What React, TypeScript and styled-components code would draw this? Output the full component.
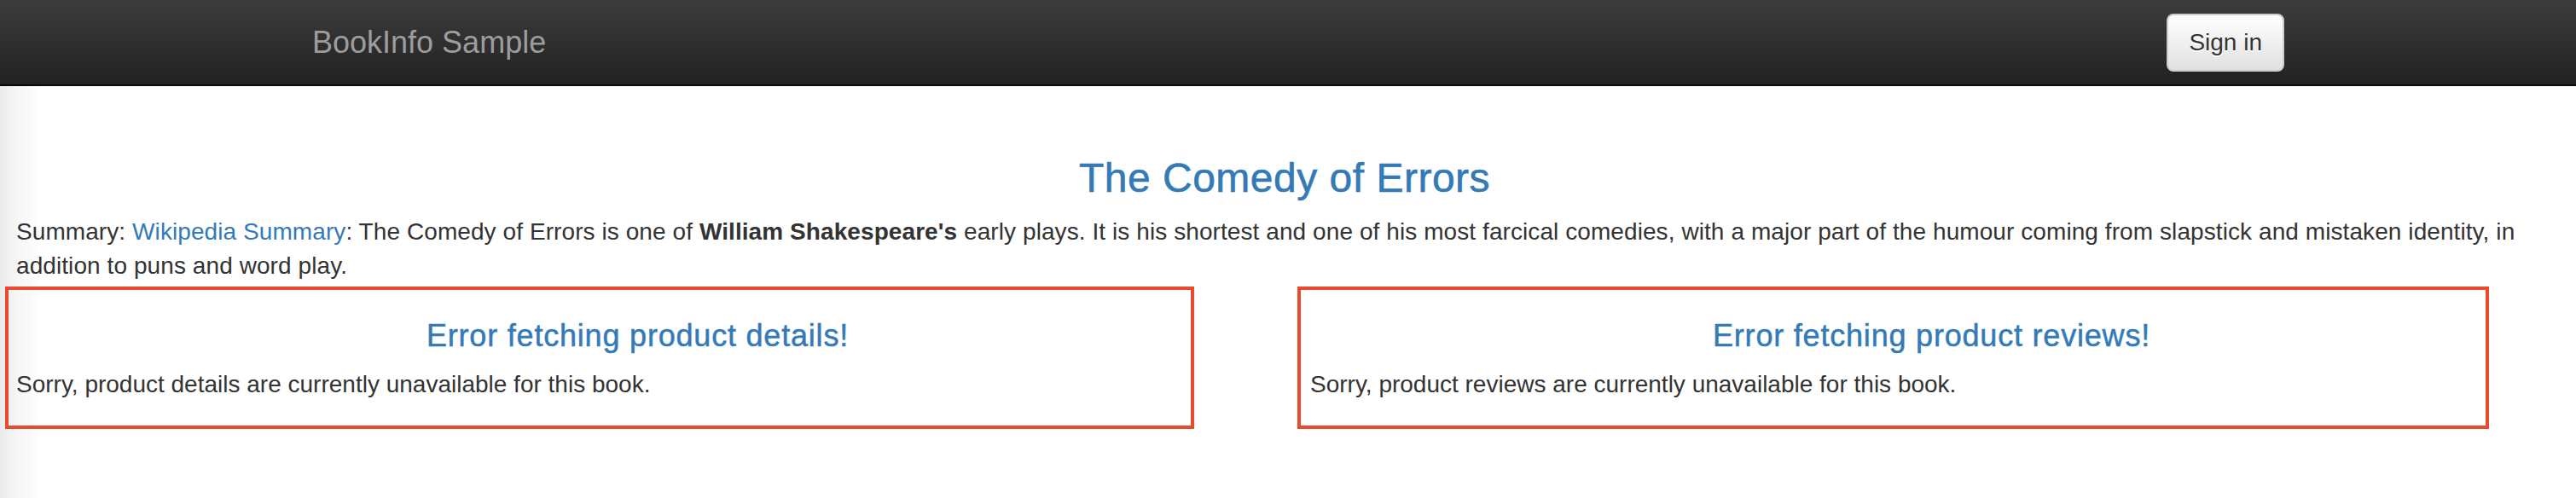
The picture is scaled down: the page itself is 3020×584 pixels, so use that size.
import React from "react";
import styled, { createGlobalStyle } from "styled-components";

const GlobalStyle = createGlobalStyle`
  html, body {
    margin: 0;
    padding: 0;
    background: #ffffff;
    overflow: hidden;
  }
  body {
    font-family: "Liberation Sans", Arial, Helvetica, sans-serif;
    font-size: 28px;
    line-height: 40px;
    color: #333333;
  }
  * { box-sizing: border-box; }
`;

const Navbar = styled.nav`
  height: 101px;
  background-image: linear-gradient(to bottom, #3c3c3c 0%, #222222 100%);
  border-bottom: 2px solid #080808;
  display: flex;
  justify-content: space-between;
  align-items: flex-start;
  padding: 0 342px 0 366px;
`;

const Brand = styled.a`
  display: block;
  padding: 30px 0;
  font-size: 36px;
  line-height: 40px;
  color: #9d9d9d;
  text-decoration: none;
`;

const SignInButton = styled.button`
  margin-top: 16px;
  padding: 12px 24px;
  font-family: inherit;
  font-size: 28px;
  line-height: 40px;
  color: #333333;
  background-image: linear-gradient(to bottom, #ffffff 0%, #e0e0e0 100%);
  border: 2px solid #cccccc;
  border-radius: 8px;
  text-shadow: 0 2px 0 #ffffff;
  box-shadow: inset 0 2px 0 rgba(255, 255, 255, 0.15), 0 2px 2px rgba(0, 0, 0, 0.075);
  cursor: pointer;
`;

const Main = styled.main`
  display: flow-root;
  min-height: 483px;
  padding: 42px 27px 0 19px;
  background-image: linear-gradient(to right, #ebebeb 0px, #f7f7f7 22px, #ffffff 52px);
`;

const Title = styled.h3`
  margin: 40px 0 16px;
  font-size: 48px;
  line-height: 52.8px;
  font-weight: 500;
  letter-spacing: 0.5px;
  -webkit-text-stroke: 0.6px #337ab7;
  text-align: center;
  color: #337ab7;
`;

const Summary = styled.p`
  margin: 0 0 20px;
  letter-spacing: 0.08px;
`;

const Link = styled.a`
  color: #337ab7;
  text-decoration: none;
`;

const Row = styled.div`
  display: grid;
  grid-template-columns: 1fr 1fr;
  column-gap: 60px;
`;

const Column = styled.section`
  position: relative;
  display: flow-root;
`;

const Highlight = styled.div<{ $left: number; $right: number }>`
  position: absolute;
  top: -16px;
  bottom: -12px;
  left: ${(p) => p.$left}px;
  right: ${(p) => p.$right}px;
  border: 4px solid #ea4a2e;
  pointer-events: none;
`;

const ErrorTitle = styled.h4`
  margin: 22px 0 17.5px;
  font-size: 36px;
  line-height: 39.6px;
  font-weight: 500;
  letter-spacing: 0.8px;
  -webkit-text-stroke: 0.5px #337ab7;
  text-align: center;
  color: #337ab7;
`;

const ErrorText = styled.p`
  margin: 0 0 20px;
`;

const panels = [
  {
    title: "Error fetching product details!",
    text: "Sorry, product details are currently unavailable for this book.",
    left: -13,
    right: 76,
  },
  {
    title: "Error fetching product reviews!",
    text: "Sorry, product reviews are currently unavailable for this book.",
    left: -15,
    right: 75,
  },
];

export default function App() {
  return (
    <>
      <GlobalStyle />
      <Navbar>
        <Brand href="#">BookInfo Sample</Brand>
        <SignInButton type="button">Sign in</SignInButton>
      </Navbar>
      <Main>
        <Title>The Comedy of Errors</Title>
        <Summary>
          Summary: <Link href="#">Wikipedia Summary</Link>: The Comedy of Errors is one of{" "}
          <b>William Shakespeare's</b> early plays. It is his shortest and one of his most farcical
          comedies, with a major part of the humour coming from slapstick and mistaken identity, in
          addition to puns and word play.
        </Summary>
        <Row>
          {panels.map((p) => (
            <Column key={p.title}>
              <Highlight $left={p.left} $right={p.right} />
              <ErrorTitle>{p.title}</ErrorTitle>
              <ErrorText>{p.text}</ErrorText>
            </Column>
          ))}
        </Row>
      </Main>
    </>
  );
}
